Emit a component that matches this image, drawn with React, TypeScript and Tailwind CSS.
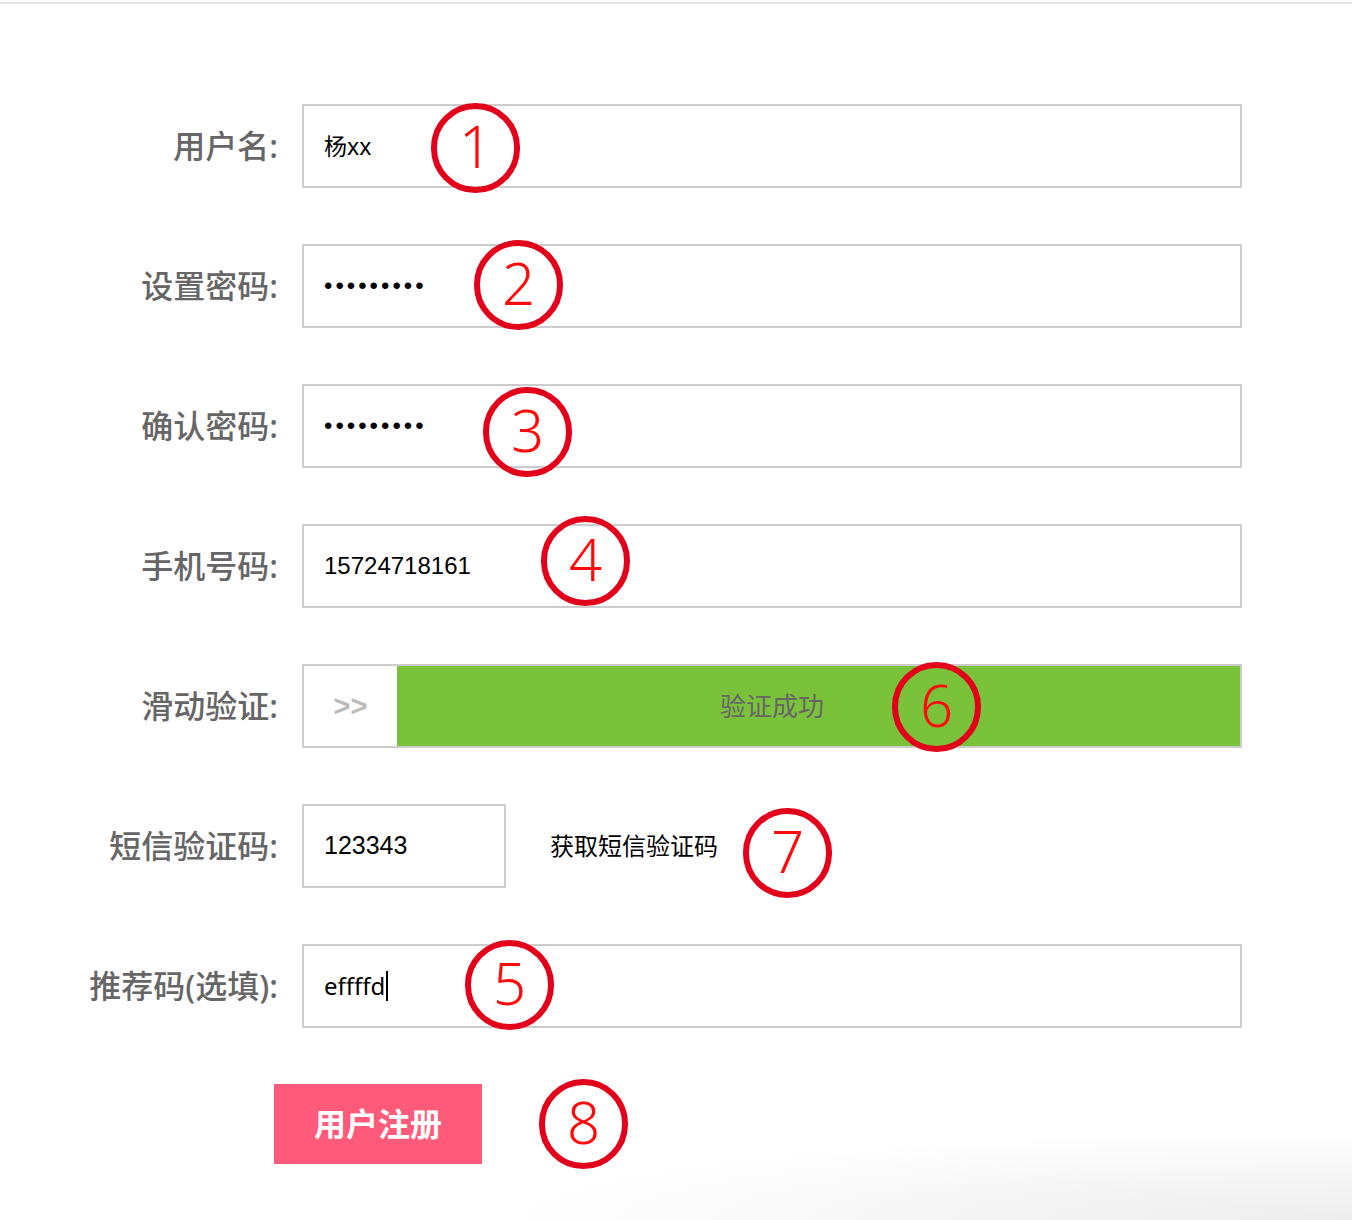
import React from 'react'

type Row = {
  label: string
  content: React.ReactNode
}

const field = 'flex h-[84px] items-center border-2 border-[#cccccc] bg-white'

const marks = [
  { n: '1', x: 475, y: 148 },
  { n: '2', x: 518, y: 285 },
  { n: '3', x: 527, y: 432 },
  { n: '4', x: 585, y: 561 },
  { n: '6', x: 936, y: 707 },
  { n: '7', x: 787, y: 853 },
  { n: '5', x: 509, y: 985 },
  { n: '8', x: 583, y: 1124 },
]

function Mark({ n, x, y }: { n: string; x: number; y: number }) {
  return (
    <div
      className="absolute flex h-[90px] w-[89px] items-center justify-center rounded-full border-[6px] border-[#e3001b] font-['Noto_Sans',sans-serif] text-[58px] font-light leading-none text-[#ff0a0a]"
      style={{ left: x - 44, top: y - 45 }}
    >
      <span className="-mt-[4px]">{n}</span>
    </div>
  )
}

export default function App() {
  const rows: Row[] = [
    {
      label: '用户名:',
      content: (
        <div className={`${field} w-[940px] px-5 text-[23px] text-black`}>杨xx</div>
      ),
    },
    {
      label: '设置密码:',
      content: (
        <div className={`${field} w-[940px] px-5 font-['Liberation_Sans',sans-serif] text-[24px] tracking-[3px] text-black`}>
          •••••••••
        </div>
      ),
    },
    {
      label: '确认密码:',
      content: (
        <div className={`${field} w-[940px] px-5 font-['Liberation_Sans',sans-serif] text-[24px] tracking-[3px] text-black`}>
          •••••••••
        </div>
      ),
    },
    {
      label: '手机号码:',
      content: (
        <div className={`${field} w-[940px] px-5 font-['Liberation_Sans',sans-serif] text-[24px] text-black`}>
          15724718161
        </div>
      ),
    },
    {
      label: '滑动验证:',
      content: (
        <div className="relative flex h-[84px] w-[940px] border-2 border-[#cccccc] bg-white">
          <div className="flex w-[93px] items-center justify-center pt-[2px] font-['Liberation_Sans',sans-serif] text-[29px] font-bold text-[#bbbbbb]">
            &gt;&gt;
          </div>
          <div className="flex-1 bg-[#7bc23b]" />
          <div className="absolute inset-0 flex items-center justify-center text-[26px] text-[#666666]">
            验证成功
          </div>
        </div>
      ),
    },
    {
      label: '短信验证码:',
      content: (
        <div className="flex items-center">
          <div className={`${field} w-[204px] px-5 font-['Liberation_Sans',sans-serif] text-[25px] text-black`}>
            123343
          </div>
          <span className="ml-[44px] text-[24px] text-black">获取短信验证码</span>
        </div>
      ),
    },
    {
      label: '推荐码(选填):',
      content: (
        <div className={`${field} w-[940px] px-5 text-[24px] text-black`}>
          effffd
          <span className="ml-[1px] h-[30px] w-[2px] bg-black" />
        </div>
      ),
    },
  ]

  return (
    <div className="relative min-h-[1220px] overflow-hidden bg-white font-['Noto_Sans','Noto_Sans_CJK_SC',sans-serif]">
      <div className="mt-[2px] h-[2px] bg-[#e8e8e8]" />

      <div className="flex flex-col gap-[56px] pt-[100px]">
        {rows.map((r) => (
          <div key={r.label} className="flex items-center">
            <div className="w-[278px] text-right text-[32px] font-medium text-[#666666]">{r.label}</div>
            <div className="ml-[24px]">{r.content}</div>
          </div>
        ))}

        <div className="pl-[274px]">
          <button
            type="button"
            className="flex h-[80px] w-[208px] items-center justify-center bg-[#ff5a79] text-[32px] font-bold text-white"
          >
            用户注册
          </button>
        </div>
      </div>

      <div className="pointer-events-none absolute bottom-0 right-0 h-[90px] w-[860px] bg-[radial-gradient(ellipse_at_bottom_right,#ededed,rgba(255,255,255,0)_70%)]" />

      {marks.map((m) => (
        <Mark key={m.n} {...m} />
      ))}
    </div>
  )
}
